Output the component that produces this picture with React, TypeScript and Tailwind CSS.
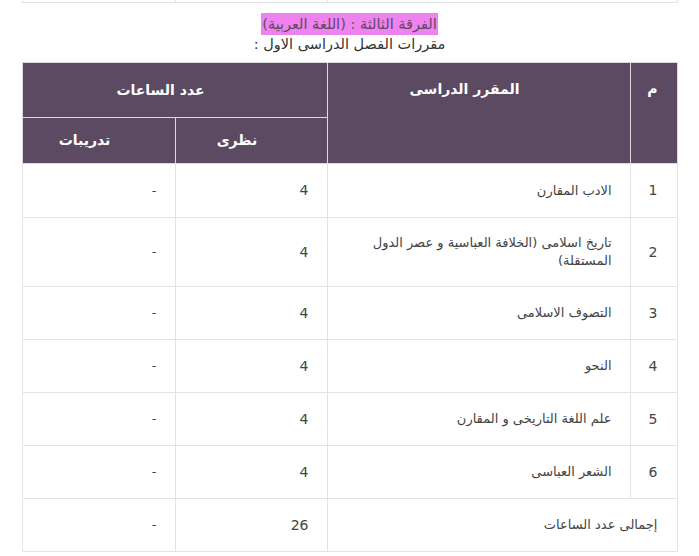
import React from "react";

type Course = {
  n: number;
  name: string;
  theory: string;
  training: string;
  h: string;
};

const courses: Course[] = [
  { n: 1, name: "الادب المقارن", theory: "4", training: "-", h: "h-[54px]" },
  {
    n: 2,
    name: "تاريخ اسلامى (الخلافة العباسية و عصر الدول المستقلة)",
    theory: "4",
    training: "-",
    h: "h-[69px]",
  },
  { n: 3, name: "التصوف الاسلامى", theory: "4", training: "-", h: "h-[53px]" },
  { n: 4, name: "النحو", theory: "4", training: "-", h: "h-[53px]" },
  { n: 5, name: "علم اللغة التاريخى و المقارن", theory: "4", training: "-", h: "h-[53px]" },
  { n: 6, name: "الشعر العباسى", theory: "4", training: "-", h: "h-[53px]" },
];

const font = {
  fontFamily: '"DejaVu Sans", "Open Sans", sans-serif',
};

function App() {
  return (
    <div className="min-h-screen bg-white" style={font}>
      <div dir="rtl" className="mx-auto w-[656px]">
        {/* tail of the previous table */}
        <div className="flex h-[3px] border-x border-b border-[#e3e3e3]">
          <div className="w-[350px] border-l border-[#e3e3e3]" />
          <div className="w-[152px] border-l border-[#e3e3e3]" />
          <div className="flex-1" />
        </div>

        <div className="flex flex-col items-center pt-[10px] pb-[9px]">
          <p className="bg-[#ee82ee] px-[1px] text-[14.5px] leading-[22px] text-[#5b4a5f]">
            الفرقة الثالثة : (اللغة العربية)
          </p>
          <p className="text-[14.5px] leading-[18px] text-[#333]">
            مقررات الفصل الدراسى الاول :
          </p>
        </div>

        <table className="w-full border-collapse border border-[#e3e3e3] text-[13px] text-[#444]">
          <thead className="bg-[#5c4962] text-white">
            <tr className="h-[55px]">
              <th
                rowSpan={2}
                className="w-[47px] border border-[#dcdcdc] pt-[16px] pr-[19px] text-right align-top text-[14px] font-bold"
              >
                م
              </th>
              <th
                rowSpan={2}
                className="w-[303px] border border-[#dcdcdc] pt-[16px] pr-[28px] text-center align-top text-[14px] font-bold"
              >
                المقرر الدراسى
              </th>
              <th
                colSpan={2}
                className="border border-[#dcdcdc] pr-[28px] text-center align-middle text-[14px] font-bold"
              >
                عدد الساعات
              </th>
            </tr>
            <tr className="h-[46px]">
              <th className="w-[152px] border border-[#dcdcdc] pr-[28px] text-center text-[14px] font-bold">
                نظرى
              </th>
              <th className="border border-[#dcdcdc] pr-[28px] text-center text-[14px] font-bold">
                تدريبات
              </th>
            </tr>
          </thead>
          <tbody>
            {courses.map((c) => (
              <tr key={c.n} className={c.h}>
                <td className="border border-[#e3e3e3] pr-[19px] text-right text-[14px]">
                  {c.n}
                </td>
                <td className="border border-[#e3e3e3] pr-[18px] pl-[14px] text-right leading-[18px]">
                  {c.name}
                </td>
                <td className="border border-[#e3e3e3] pr-[18px] text-right text-[14px]">
                  {c.theory}
                </td>
                <td className="border border-[#e3e3e3] pr-[18px] text-right">
                  {c.training}
                </td>
              </tr>
            ))}
            <tr className="h-[53px]">
              <td
                colSpan={2}
                className="border border-[#e3e3e3] pr-[19px] text-right"
              >
                إجمالى عدد الساعات
              </td>
              <td className="border border-[#e3e3e3] pr-[18px] text-right text-[14px]">
                26
              </td>
              <td className="border border-[#e3e3e3] pr-[18px] text-right">
                -
              </td>
            </tr>
          </tbody>
        </table>
      </div>
    </div>
  );
}

export default App;
